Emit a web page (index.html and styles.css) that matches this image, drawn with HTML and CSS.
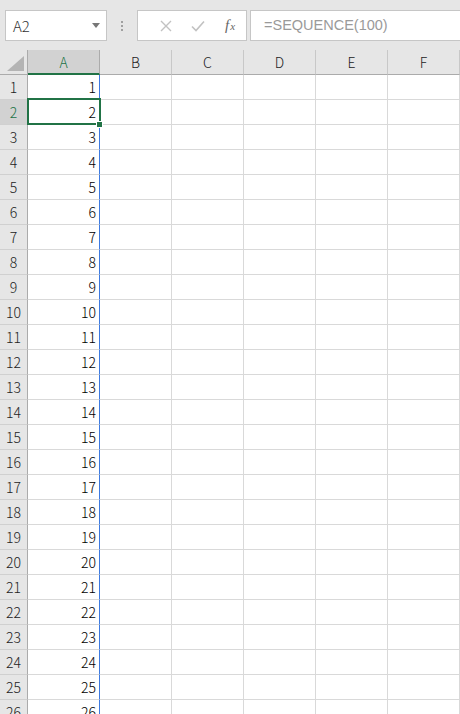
FILE: index.html
```html
<!DOCTYPE html>
<html lang="ja">
<head>
  <meta charset="UTF-8">
  <meta name="viewport" content="width=device-width, initial-scale=1.0">
  <title>Book1 - Excel</title>
  <link rel="stylesheet" href="styles.css">
</head>
<body>
  <div class="toolbar">
    <div class="name-box">
      <span>A2</span>
      <span class="drop"></span>
    </div>
    <div class="grip"><i></i><i></i><i></i></div>
    <div class="fx-buttons">
      <span class="btn">
        <svg width="12" height="12" viewBox="0 0 12 12"><path d="M1 1L11 11M11 1L1 11" stroke="#c2c2c2" stroke-width="1.4" fill="none"/></svg>
      </span>
      <span class="btn">
        <svg width="14" height="12" viewBox="0 0 14 12"><path d="M1 6.5L5 10.5L13 1.5" stroke="#c2c2c2" stroke-width="1.6" fill="none"/></svg>
      </span>
      <span class="btn fx"><i>f</i><i class="x">x</i></span>
    </div>
    <div class="formula">=SEQUENCE(100)</div>
  </div>

  <div class="sheet" id="sheet">
    <div class="corner"><span class="tri"></span></div>
    <div class="col-head sel">A</div>
    <div class="col-head">B</div>
    <div class="col-head">C</div>
    <div class="col-head">D</div>
    <div class="col-head">E</div>
    <div class="col-head">F</div>
  </div>

  <script>
    // fill the visible rows; column A holds the spilled SEQUENCE values
    const sheet = document.getElementById('sheet');
    for (let r = 1; r <= 26; r++) {
      const head = document.createElement('div');
      head.className = 'row-head' + (r === 2 ? ' sel' : '');
      head.textContent = r;
      sheet.appendChild(head);

      const a = document.createElement('div');
      a.className = 'cell num spill' + (r === 2 ? ' active' : '');
      a.textContent = r;
      sheet.appendChild(a);

      for (let c = 0; c < 5; c++) {
        const cell = document.createElement('div');
        cell.className = 'cell';
        sheet.appendChild(cell);
      }
    }
  </script>
</body>
</html>
```

FILE: styles.css
```css
body {
  margin: 0;
  background: #fff;
  font-family: "Noto Sans CJK JP", "Liberation Sans", sans-serif;
  font-weight: 300;
  overflow: hidden;
}

/* name box + formula bar */
.toolbar {
  height: 50px;
  box-sizing: border-box;
  padding-top: 10px;
  background: #e6e6e6;
  display: flex;
  align-items: flex-start;
}

.name-box {
  margin-left: 5px;
  width: 102px;
  height: 31px;
  box-sizing: border-box;
  border: 1px solid #c6c6c6;
  background: #fff;
  display: flex;
  align-items: center;
  justify-content: space-between;
  padding: 0 6px 0 7px;
  font-size: 15px;
  color: #333;
}

.drop {
  width: 0;
  height: 0;
  border-left: 4px solid transparent;
  border-right: 4px solid transparent;
  border-top: 5px solid #777;
}

.grip {
  width: 30px;
  height: 31px;
  display: flex;
  flex-direction: column;
  align-items: center;
  justify-content: center;
  gap: 2px;
}

.grip i {
  width: 2px;
  height: 2px;
  background: #a0a0a0;
}

.fx-buttons {
  width: 110px;
  height: 31px;
  box-sizing: border-box;
  border: 1px solid #c6c6c6;
  background: #fff;
  display: flex;
  align-items: center;
  padding-left: 12px;
}

.btn {
  width: 37px;
  display: flex;
  justify-content: center;
  align-items: center;
}

.fx {
  font-family: "Liberation Serif", serif;
  font-weight: 400;
  color: #666;
  font-size: 15px;
}

.fx .x {
  font-size: 11px;
  margin-left: 1px;
}

.formula {
  margin-left: 3px;
  flex: 1;
  height: 31px;
  box-sizing: border-box;
  border: 1px solid #c6c6c6;
  border-right: none;
  background: #fff;
  padding-left: 13px;
  line-height: 29px;
  font-family: "Liberation Sans", sans-serif;
  font-weight: 400;
  font-size: 14.5px;
  color: #9a9a9a;
}

/* worksheet grid */
.sheet {
  display: grid;
  grid-template-columns: 28px repeat(6, 72px);
  grid-auto-rows: 25px;
  font-size: 14px;
}

.corner {
  background: #e6e6e6;
  border-right: 1px solid #ababab;
  border-bottom: 1px solid #ababab;
  box-sizing: border-box;
  display: flex;
  justify-content: flex-end;
  align-items: flex-end;
  padding: 0 3px 3px 0;
}

.tri {
  width: 17px;
  height: 15px;
  background: #b4b4b4;
  clip-path: polygon(100% 0, 100% 100%, 0 100%);
}

.col-head {
  background: #e6e6e6;
  border-right: 1px solid #c8c8c8;
  border-bottom: 1px solid #ababab;
  box-sizing: border-box;
  text-align: center;
  line-height: 25px;
  color: #222;
}

.col-head.sel {
  background: #d2d2d2;
  color: #217346;
  border-bottom: 2px solid #217346;
  border-right-color: #ababab;
}

.row-head {
  background: #e6e6e6;
  border-right: 1px solid #ababab;
  border-bottom: 1px solid #d0d0d0;
  box-sizing: border-box;
  text-align: center;
  line-height: 25px;
  color: #222;
}

.row-head.sel {
  background: #d2d2d2;
  color: #217346;
}

.cell {
  border-right: 1px solid #d9d9d9;
  border-bottom: 1px solid #d9d9d9;
  box-sizing: border-box;
  line-height: 25px;
  color: #000;
}

.num {
  text-align: right;
  padding-right: 3px;
}

.spill {
  border-right: 1px solid #3d7ae0;
}

.active {
  position: relative;
}

.active::after {
  content: "";
  position: absolute;
  top: -2px;
  left: -1px;
  right: -2px;
  bottom: -1px;
  border: 2px solid #217346;
}

.active::before {
  content: "";
  position: absolute;
  right: -4px;
  bottom: -4px;
  width: 5px;
  height: 5px;
  background: #217346;
  border: 1px solid #fff;
  z-index: 1;
}
```
